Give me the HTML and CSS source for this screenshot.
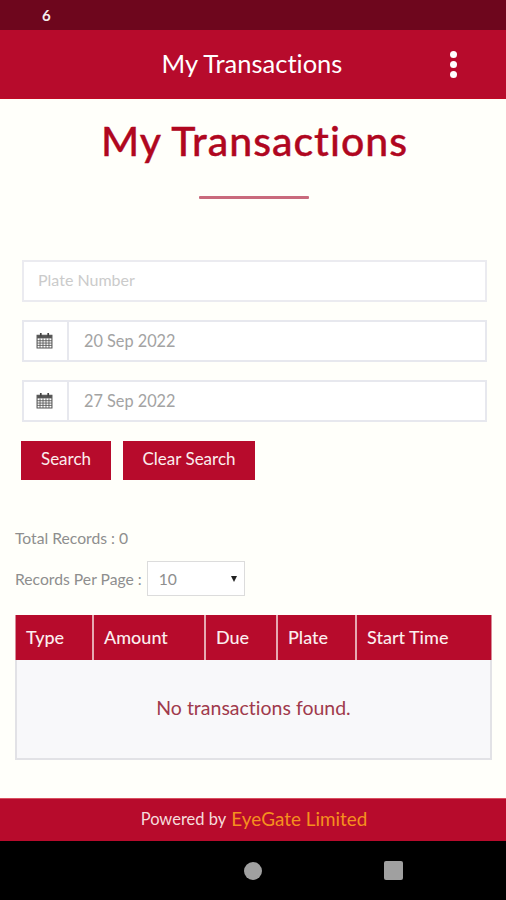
FILE: index.html
```html
<!DOCTYPE html>
<html lang="en">
<head>
    <meta charset="UTF-8">
    <meta name="viewport" content="width=device-width, initial-scale=1.0">
    <title>My Transactions</title>
    <link rel="stylesheet" href="styles.css">
</head>
<body>

    <div class="status-bar"><span class="status-time">6</span></div>

    <header class="app-bar">
        <span class="app-title">My Transactions</span>
        <span class="menu-dots"><i></i><i></i><i></i></span>
    </header>

    <main class="content">
        <h1 class="page-title">My Transactions</h1>
        <div class="title-rule"></div>

        <div class="search-form">
            <input class="field" type="text" placeholder="Plate Number" aria-label="Plate number">

            <div class="date-field">
                <span class="date-addon">
                    <svg class="cal-icon" viewBox="0 0 16 16" aria-hidden="true">
                        <path d="M1 3h14v12H1z" fill="#fff" stroke="#555" stroke-width="1"/>
                        <path d="M1 3h14v3H1z" fill="#555"/>
                        <path d="M1 8.2h14M1 10.4h14M1 12.6h14M3.8 6v9M6.6 6v9M9.4 6v9M12.2 6v9" stroke="#555" stroke-width=".8" fill="none"/>
                        <path d="M4.5 1v3M11.5 1v3" stroke="#444" stroke-width="1.6" fill="none"/>
                    </svg>
                </span>
                <input class="date-input" type="text" value="20 Sep 2022" aria-label="Start date">
            </div>

            <div class="date-field">
                <span class="date-addon">
                    <svg class="cal-icon" viewBox="0 0 16 16" aria-hidden="true">
                        <path d="M1 3h14v12H1z" fill="#fff" stroke="#555" stroke-width="1"/>
                        <path d="M1 3h14v3H1z" fill="#555"/>
                        <path d="M1 8.2h14M1 10.4h14M1 12.6h14M3.8 6v9M6.6 6v9M9.4 6v9M12.2 6v9" stroke="#555" stroke-width=".8" fill="none"/>
                        <path d="M4.5 1v3M11.5 1v3" stroke="#444" stroke-width="1.6" fill="none"/>
                    </svg>
                </span>
                <input class="date-input" type="text" value="27 Sep 2022" aria-label="End date">
            </div>

            <div class="form-buttons">
                <button class="btn btn-search">Search</button>
                <button class="btn btn-clear">Clear Search</button>
            </div>
        </div>

        <div class="total-records">Total Records : 0</div>

        <div class="per-page">
            <span>Records Per Page :</span>
            <span class="per-page-select">10<span class="select-arrow"></span></span>
        </div>

        <table class="tx-table">
            <thead>
                <tr>
                    <th class="col-type">Type</th>
                    <th class="col-amount">Amount</th>
                    <th class="col-due">Due</th>
                    <th class="col-plate">Plate</th>
                    <th>Start Time</th>
                </tr>
            </thead>
            <tbody>
                <tr>
                    <td colspan="5" class="empty-row">No transactions found.</td>
                </tr>
            </tbody>
        </table>
    </main>

    <footer class="app-footer">
        <span class="footer-text">Powered by</span>
        <span class="footer-brand">EyeGate Limited</span>
    </footer>

    <div class="nav-bar">
        <span></span>
        <span class="nav-home"></span>
        <span class="nav-recent"></span>
    </div>

</body>
</html>
```

FILE: styles.css
```css
body {
    font-family: Lato, "Open Sans", sans-serif;
    font-variant-ligatures: none;
    background-color: #fffffa;
    margin: 0;
    padding: 0;
    height: 900px;
    overflow: hidden;
    display: flex;
    flex-direction: column;
}

.status-bar {
    height: 30px;
    background-color: #6e061d;
    flex: none;
    display: flex;
    align-items: center;
    padding-left: 42px;
}

.status-time {
    color: #f4eeee;
    font-size: 15px;
    font-weight: 700;
}

.app-bar {
    height: 68px;
    background-color: #b70b2c;
    border-bottom: 1px solid #c00a24;
    flex: none;
    position: relative;
    display: flex;
    align-items: center;
    justify-content: center;
    color: #fff;
}

.app-title {
    font-size: 25.5px;
    margin-top: -2px;
    padding-right: 2px;
}

/* overflow menu sits over the bar */
.menu-dots {
    position: absolute;
    right: 49px;
    top: 21px;
    display: flex;
    flex-direction: column;
    gap: 3px;
}

.menu-dots i {
    width: 7px;
    height: 7px;
    border-radius: 50%;
    background-color: #fff;
}

.content {
    flex: 1;
    padding: 0 14px 0 15px;
}

.page-title {
    margin: 18px 0 0;
    font-size: 41px;
    line-height: 48px;
    font-weight: 500;
    letter-spacing: 1px;
    -webkit-text-stroke: .4px #b0071f;
    color: #b0071f;
    text-align: center;
    padding-left: 2px;
}

.title-rule {
    width: 110px;
    height: 3px;
    margin: 31px auto 0;
    background-color: #c96a7c;
    border-radius: 1px;
}

.search-form {
    margin: 61px 5px 0 7px;
}

.field,
.date-input {
    font-family: inherit;
    font-variant-ligatures: none;
    font-size: 16.3px;
    background-color: #fff;
    box-sizing: border-box;
    border-radius: 0;
    outline: none;
}

.field {
    display: block;
    width: 100%;
    height: 42px;
    padding: 0 14px 3px;
    border: 2px solid #ebebf0;
    font-size: 16px;
}

.field::placeholder {
    color: #cbcbcb;
}

.date-field {
    display: flex;
    height: 42px;
    margin-top: 18px;
    border: 2px solid #e7e8ee;
    box-sizing: border-box;
    background-color: #fff;
}

.date-addon {
    width: 45px;
    flex: none;
    display: flex;
    align-items: center;
    justify-content: center;
    border-right: 2px solid #e7e8ee;
    padding-right: 2px;
    box-sizing: border-box;
}

.cal-icon {
    width: 17px;
    height: 17px;
    margin-top: -2px;
}

.date-input {
    flex: 1;
    min-width: 0;
    border: none;
    padding: 0 15px 2px;
    color: #a3a3a3;
}

.form-buttons {
    display: flex;
    gap: 12px;
    margin: 19px 0 0 -1px;
}

.btn {
    height: 39px;
    background-color: #b70b2c;
    color: #fbeeee;
    border: none;
    padding: 0 0 4px;
    font-family: inherit;
    font-variant-ligatures: none;
    font-size: 17px;
    cursor: pointer;
}

.btn-search {
    width: 90px;
}

.btn-clear {
    width: 132px;
}

.total-records {
    margin-top: 49px;
    font-size: 15.7px;
    line-height: 18px;
    color: #8e8e8e;
}

.per-page {
    display: flex;
    align-items: center;
    gap: 5px;
    margin-top: 14px;
    font-size: 15.7px;
    color: #8e8e8e;
}

.per-page-select {
    width: 98px;
    height: 35px;
    box-sizing: border-box;
    border: 1px solid #dcdcdc;
    background-color: #fff;
    padding: 0 7px 0 11px;
    display: flex;
    align-items: center;
    justify-content: space-between;
}

.select-arrow {
    width: 0;
    height: 0;
    border-left: 3.5px solid transparent;
    border-right: 3.5px solid transparent;
    border-top: 6px solid #222;
}

.tx-table {
    width: 477px;
    margin-top: 19px;
    border-collapse: separate;
    border-spacing: 0;
    table-layout: fixed;
}

.tx-table th {
    height: 45px;
    padding: 0 0 2px 10px;
    box-sizing: border-box;
    background-color: #b70b2c;
    color: #fbeeee;
    font-size: 18px;
    font-weight: 500;
    text-align: left;
    border-right: 2px solid #e7a9b2;
}

.tx-table th:last-child {
    border-right: 1px solid #d88a98;
}

.tx-table th.col-type {
    padding-left: 10px;
    border-left: 1px solid #d88a98;
}

.col-type {
    width: 79px;
}

.col-amount {
    width: 112px;
}

.col-due {
    width: 72px;
}

.col-plate {
    width: 79px;
}

.empty-row {
    height: 100px;
    box-sizing: border-box;
    padding: 0 0 3px;
    text-align: center;
    background-color: #f8f8fa;
    border: 2px solid #e2e2e6;
    border-top: none;
    color: #a03a4c;
    font-size: 19.5px;
}

.app-footer {
    height: 43px;
    flex: none;
    box-sizing: border-box;
    background-color: #b70b2c;
    border-top: 1px solid #d9505f;
    padding: 0 0 3px 2px;
    color: #f5dcdc;
    font-size: 16.5px;
    display: flex;
    align-items: center;
    justify-content: center;
    gap: 5px;
}

.footer-brand {
    color: #f5901e;
    font-size: 18.9px;
}

.nav-bar {
    height: 59px;
    flex: none;
    background-color: #000;
    display: grid;
    grid-template-columns: repeat(3, 140px);
    justify-content: center;
    justify-items: center;
    align-items: center;
}

.nav-home {
    width: 18px;
    height: 18px;
    border-radius: 50%;
    background-color: #a0a0a0;
}

.nav-recent {
    width: 19px;
    height: 19px;
    border-radius: 2px;
    background-color: #a0a0a0;
}
```
